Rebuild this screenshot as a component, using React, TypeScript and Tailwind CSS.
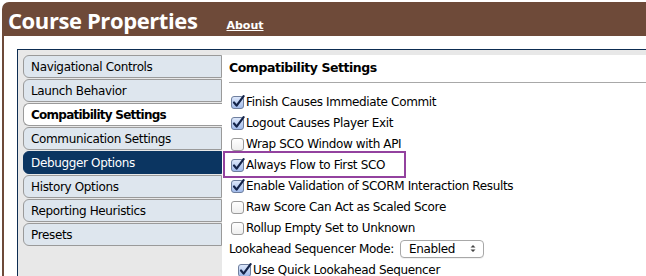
import React from 'react';

const TABS: { label: string; state?: 'selected' | 'dark' }[] = [
  { label: 'Navigational Controls' },
  { label: 'Launch Behavior' },
  { label: 'Compatibility Settings', state: 'selected' },
  { label: 'Communication Settings' },
  { label: 'Debugger Options', state: 'dark' },
  { label: 'History Options' },
  { label: 'Reporting Heuristics' },
  { label: 'Presets' },
];

const OPTIONS: { label: string; checked: boolean; highlight?: boolean }[] = [
  { label: 'Finish Causes Immediate Commit', checked: true },
  { label: 'Logout Causes Player Exit', checked: true },
  { label: 'Wrap SCO Window with API', checked: false },
  { label: 'Always Flow to First SCO', checked: true, highlight: true },
  { label: 'Enable Validation of SCORM Interaction Results', checked: true },
  { label: 'Raw Score Can Act as Scaled Score', checked: false },
  { label: 'Rollup Empty Set to Unknown', checked: false },
];

function Checkbox({ checked }: { checked: boolean }) {
  return (
    <svg width="14" height="14" viewBox="0 0 14 14" className="shrink-0">
      <defs>
        <linearGradient id="cbOn" x1="0" y1="0" x2="0" y2="1">
          <stop offset="0" stopColor="#dfe9fb" />
          <stop offset="1" stopColor="#9fb9ea" />
        </linearGradient>
        <linearGradient id="cbOff" x1="0" y1="0" x2="0" y2="1">
          <stop offset="0" stopColor="#ffffff" />
          <stop offset="1" stopColor="#eeeeee" />
        </linearGradient>
      </defs>
      <rect
        x="0.5"
        y="1.5"
        width="12"
        height="12"
        rx="2.5"
        fill={checked ? 'url(#cbOn)' : 'url(#cbOff)'}
        stroke={checked ? '#6f7f9e' : '#9a9a9a'}
      />
      {checked && (
        <path
          d="M3 7.5 L5.6 10.6 L12.6 1.2"
          fill="none"
          stroke="#14244a"
          strokeWidth="2.2"
          strokeLinecap="round"
          strokeLinejoin="round"
        />
      )}
    </svg>
  );
}

function OptionRow({ label, checked, highlight }: { label: string; checked: boolean; highlight?: boolean }) {
  return (
    <div className="relative flex h-[21px] items-center pl-[2px]">
      {highlight && (
        <span className="absolute -left-[6px] -top-[3px] h-[27px] w-[183px] border-2 border-[#93429f]" />
      )}
      <Checkbox checked={checked} />
      <span className="ml-px">{label}</span>
    </div>
  );
}

export default function App() {
  return (
    <div
      className="h-[276px] w-[646px] overflow-hidden bg-white pl-[2px] pt-[2px] text-[12px] tracking-[-0.35px] text-black"
      style={{ fontFamily: '"DejaVu Sans", Verdana, sans-serif' }}
    >
      <div className="flex h-full flex-col overflow-hidden rounded-tl-[7px] bg-[#6e4a39]">
        {/* ── Title bar ── */}
        <div className="flex h-[34px] shrink-0 items-baseline pl-[6px] pt-[6px]">
          <span
            className="text-[22px] font-bold leading-[24px] tracking-[-0.4px] text-white"
            style={{ fontFamily: '"Open Sans", sans-serif' }}
          >
            Course Properties
          </span>
          <a className="ml-[29px] text-[11px] font-bold tracking-[0px] text-white underline">About</a>
        </div>

        {/* ── Body ── */}
        <div className="ml-[2px] flex-1 bg-white pl-[13px] pt-[13px]">
          <div className="flex h-full border-l border-t border-[#0d2d52] bg-[#e8e8e8] pl-[5px] pt-[5px]">
            <div className="flex w-[199px] shrink-0 flex-col">
              {TABS.map(({ label, state }) => (
                <div
                  key={label}
                  className={
                    state === 'selected'
                      ? 'mb-px flex h-[23px] items-center rounded-l-[6px] border border-r-0 border-[#9a9a9a] bg-white pl-[7px] font-bold tracking-[-0.75px]'
                      : state === 'dark'
                        ? 'mb-px flex h-[23px] items-center rounded-l-[6px] border border-[#0b3561] bg-[#0b3561] pl-[7px] text-white'
                        : 'mb-px flex h-[23px] items-center rounded-l-[6px] border border-[#9a9a9a] bg-[#dee6ee] pl-[7px]'
                  }
                >
                  {label}
                </div>
              ))}
            </div>

            <div className="flex-1 bg-white pl-[7px]">
              <div className="flex h-[28px] items-center border-b border-[#a8a8a8] text-[12.5px] font-bold tracking-[-0.45px]">
                Compatibility Settings
              </div>
              <div className="mt-[8px] flex flex-col">
                {OPTIONS.map((o) => (
                  <OptionRow key={o.label} {...o} />
                ))}
                <div className="flex h-[21px] items-center">
                  <span>Lookahead Sequencer Mode:</span>
                  <div className="ml-[6px] flex h-[18px] w-[84px] items-center justify-between rounded-[4px] border border-[#a8a8a8] bg-white pl-[8px] pr-[7px] shadow-[0_1px_0_rgba(0,0,0,0.05)]">
                    <span>Enabled</span>
                    <svg width="6" height="9" viewBox="0 0 6 9">
                      <path d="M0.5 3.5 L3 1 L5.5 3.5 Z M0.5 5.5 L3 8 L5.5 5.5 Z" fill="#444" />
                    </svg>
                  </div>
                </div>
                <div className="pl-[7px]">
                  <OptionRow label="Use Quick Lookahead Sequencer" checked />
                </div>
              </div>
            </div>
          </div>
        </div>
      </div>
    </div>
  );
}
